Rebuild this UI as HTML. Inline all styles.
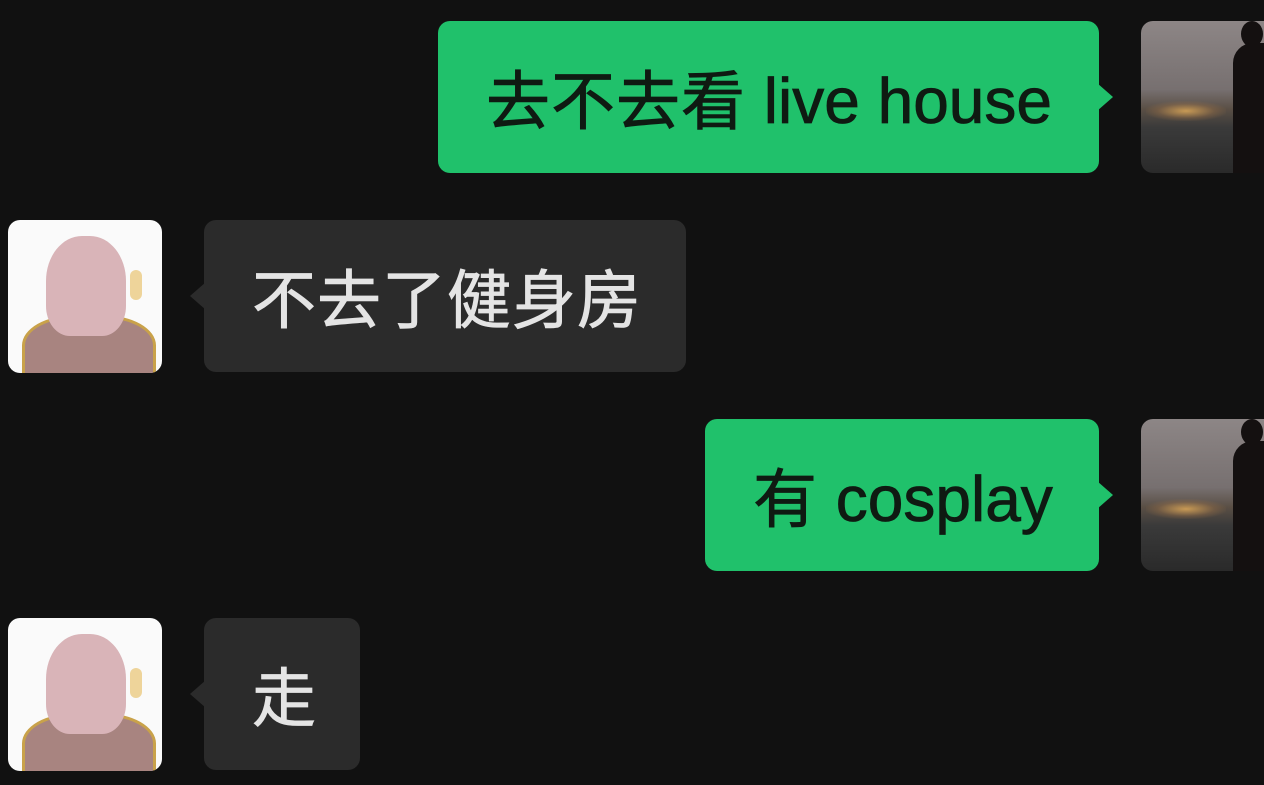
<!DOCTYPE html>
<html><head><meta charset="utf-8"><style>
html,body{margin:0;padding:0;background:#111111;width:1264px;height:785px;overflow:hidden;position:relative;font-family:"Liberation Sans","Noto Sans CJK SC",sans-serif}
.b{position:absolute;height:152px;border-radius:12px;display:flex;align-items:center;font-size:64px;letter-spacing:1px;white-space:nowrap;box-sizing:border-box;-webkit-text-stroke:0.8px currentColor}
.b span{letter-spacing:0;position:relative;top:4px}
.g{background:#20c16b;color:#0f1a12}
.d{background:#2b2b2b;color:#e4e4e4}
.g:after{content:"";position:absolute;right:-14px;top:62px;border-left:16px solid #20c16b;border-top:14px solid transparent;border-bottom:14px solid transparent}
.d:before{content:"";position:absolute;left:-14px;top:62px;border-right:16px solid #2b2b2b;border-top:14px solid transparent;border-bottom:14px solid transparent}
.ar{position:absolute;left:1141px;width:140px;height:152px;border-radius:12px;overflow:hidden;background:linear-gradient(#8d8686 0%,#777070 45%,#5a4f45 58%,#3a3a3a 70%,#2a2a2a 100%)}
.ar .p{position:absolute;right:0;top:5px;width:48px;height:152px;background:#141010;border-radius:20px 0 0 0}
.ar .h{position:absolute;right:18px;top:0;width:22px;height:26px;background:#141010;border-radius:50%}
.ar .l{position:absolute;left:5px;top:80px;width:80px;height:20px;background:radial-gradient(ellipse,#c89a55 0%,rgba(150,110,70,.4) 50%,transparent 75%)}
.al{position:absolute;left:8px;width:154px;height:153px;border-radius:12px;overflow:hidden;background:#fafafa}
.al .hair{position:absolute;left:38px;top:16px;width:80px;height:100px;background:#d9b4b8;border-radius:45% 45% 30% 30%}
.al .body{position:absolute;left:14px;top:95px;width:128px;height:70px;background:#a88480;border-radius:40% 40% 0 0;border:3px solid #c9a24a}
.al .s{position:absolute;left:122px;top:50px;width:12px;height:30px;background:#eed49a;border-radius:6px}
</style></head><body>
<div class="b g" style="left:438px;top:21px;width:661px;padding-left:48px">去不去看<span>&nbsp;live house</span></div>
<div class="ar" style="top:21px"><div class="l"></div><div class="h"></div><div class="p" style="top:22px"></div></div>

<div class="al" style="top:220px"><div class="body"></div><div class="hair"></div><div class="s"></div></div>
<div class="b d" style="left:204px;top:220px;width:482px;padding-left:48px">不去了健身房</div>

<div class="b g" style="left:705px;top:419px;width:394px;padding-left:48px">有<span>&nbsp;cosplay</span></div>
<div class="ar" style="top:419px"><div class="l"></div><div class="h"></div><div class="p" style="top:22px"></div></div>

<div class="al" style="top:618px"><div class="body"></div><div class="hair"></div><div class="s"></div></div>
<div class="b d" style="left:204px;top:618px;width:156px;padding-left:48px">走</div>
</body></html>
